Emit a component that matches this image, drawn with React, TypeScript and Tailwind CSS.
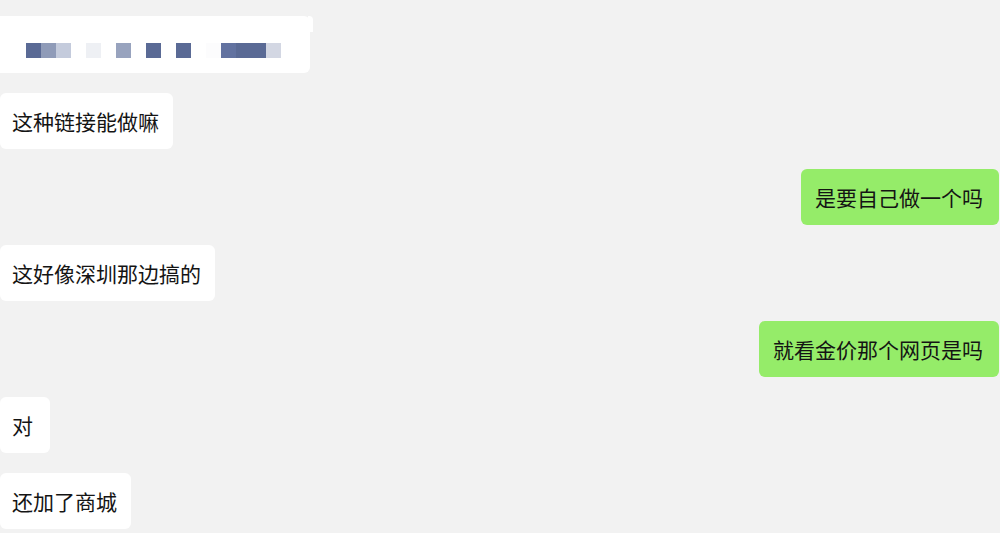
const pixels = [
  "#5a6a95",
  "#8f9bb8",
  "#c4cbdc",
  "#ffffff",
  "#eef0f4",
  "#ffffff",
  "#98a3be",
  "#ffffff",
  "#5a6a95",
  "#ffffff",
  "#5a6a95",
  "#ffffff",
  "#fcfcfd",
  "#6272a0",
  "#5a6a95",
  "#5a6a95",
  "#d3d7e3",
];

type Msg = { text: string; mine?: boolean };

const messages: Msg[] = [
  { text: "这种链接能做嘛" },
  { text: "是要自己做一个吗", mine: true },
  { text: "这好像深圳那边搞的" },
  { text: "就看金价那个网页是吗", mine: true },
  { text: "对" },
  { text: "还加了商城" },
];

function Bubble({ text, mine }: Msg) {
  if (mine) {
    return (
      <div className="flex justify-end pr-[1px]">
        <div className="h-[56px] flex items-center rounded-[6px] bg-[#95ec69] pl-[14px] pr-[16px] text-[21px] leading-none text-[#141414]">
          {text}
        </div>
      </div>
    );
  }
  return (
    <div className="flex justify-start">
      <div className="h-[56px] min-w-[50px] flex items-center rounded-[6px] bg-white pl-[12px] pr-[14px] text-[21px] leading-none text-[#141414]">
        {text}
      </div>
    </div>
  );
}

export default function App() {
  return (
    <div
      className="w-[1000px] h-[533px] overflow-hidden bg-[#f2f2f2] pt-[16px]"
      style={{ fontFamily: '"Noto Sans CJK SC", "Noto Sans", sans-serif' }}
    >
      <div className="relative w-[310px] h-[57px] bg-white rounded-r-[6px] pt-[27px] pl-[26px]">
        <div className="absolute left-[308px] top-0 w-[5px] h-[16px] bg-white rounded-tr-[4px]" />
        <div className="flex">
          {pixels.map((c, i) => (
            <div
              key={i}
              className="w-[15px] h-[15px]"
              style={{ backgroundColor: c }}
            />
          ))}
        </div>
      </div>

      <div className="flex flex-col gap-[20px] mt-[20px]">
        {messages.map((m, i) => (
          <Bubble key={i} {...m} />
        ))}
      </div>
    </div>
  );
}
